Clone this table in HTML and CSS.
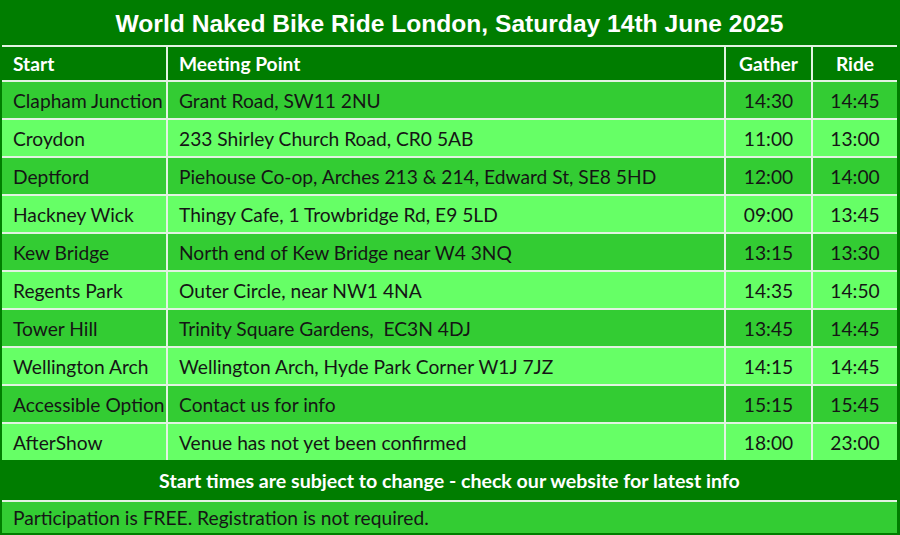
FILE: index.html
```html
<!DOCTYPE html>
<html>
<head>
<meta charset="utf-8">
<link rel="stylesheet" href="styles.css">
</head>
<body>
<div class="sheet">
  <div class="title">World Naked Bike Ride London, Saturday 14th June 2025</div>
  <table class="grid">
    <colgroup>
      <col class="c-start"><col class="c-meet"><col class="c-time"><col class="c-time2">
    </colgroup>
    <thead>
      <tr class="head">
        <th class="l">Start</th><th class="l">Meeting Point</th><th>Gather</th><th>Ride</th>
      </tr>
    </thead>
    <tbody>
      <tr class="mid"><td>Clapham Junction</td><td>Grant Road, SW11 2NU</td><td class="t">14:30</td><td class="t">14:45</td></tr>
      <tr class="lite"><td>Croydon</td><td>233 Shirley Church Road, CR0 5AB</td><td class="t">11:00</td><td class="t">13:00</td></tr>
      <tr class="mid"><td>Deptford</td><td>Piehouse Co-op, Arches 213 &amp; 214, Edward St, SE8 5HD</td><td class="t">12:00</td><td class="t">14:00</td></tr>
      <tr class="lite"><td>Hackney Wick</td><td>Thingy Cafe, 1 Trowbridge Rd, E9 5LD</td><td class="t">09:00</td><td class="t">13:45</td></tr>
      <tr class="mid"><td>Kew Bridge</td><td>North end of Kew Bridge near W4 3NQ</td><td class="t">13:15</td><td class="t">13:30</td></tr>
      <tr class="lite"><td>Regents Park</td><td>Outer Circle, near NW1 4NA</td><td class="t">14:35</td><td class="t">14:50</td></tr>
      <tr class="mid"><td>Tower Hill</td><td>Trinity Square Gardens,&nbsp; EC3N 4DJ</td><td class="t">13:45</td><td class="t">14:45</td></tr>
      <tr class="lite"><td>Wellington Arch</td><td>Wellington Arch, Hyde Park Corner W1J 7JZ</td><td class="t">14:15</td><td class="t">14:45</td></tr>
      <tr class="mid"><td>Accessible Option</td><td>Contact us for info</td><td class="t">15:15</td><td class="t">15:45</td></tr>
      <tr class="lite"><td>AfterShow</td><td>Venue has not yet been confirmed</td><td class="t">18:00</td><td class="t">23:00</td></tr>
      <tr class="note"><td colspan="4">Start times are subject to change - check our website for latest info</td></tr>
      <tr class="foot"><td colspan="4">Participation is FREE. Registration is not required.</td></tr>
    </tbody>
  </table>
</div>
</body>
</html>
```
FILE: styles.css
```css
html, body {
  margin: 0;
  padding: 0;
  background: #007d00;
}
.sheet {
  width: 900px;
  height: 535px;
  box-sizing: border-box;
  padding: 0 3px 2px 2px;
  background: #007d00;
  font-family: Lato, "Open Sans", sans-serif;
}
.title {
  height: 45px;
  line-height: 47px;
  text-align: center;
  color: #fff;
  font-family: "Liberation Sans", Arial, sans-serif;
  font-weight: bold;
  font-size: 24.6px;
}
.grid {
  width: 895px;
  border-collapse: collapse;
  table-layout: fixed;
}
.c-start { width: 165px; }
.c-meet { width: 558px; }
.c-time { width: 87px; }
.c-time2 { width: 85px; }
.grid th, .grid td {
  padding: 0 0 0 11px;
  border-top: 2px solid #e2f3e2;
  border-left: 2px solid #e2f3e2;
  font-size: 19.2px;
  color: #151515;
  white-space: nowrap;
  overflow: hidden;
}
.grid th:first-child, .grid td:first-child {
  border-left: none;
}
.head th {
  height: 33px;
  color: #fff;
  font-weight: bold;
  text-align: center;
  padding: 0;
  background: #007d00;
}
.head th.l {
  text-align: left;
  padding-left: 11px;
}
.mid td, .lite td {
  height: 36px;
}
.mid td { background: #33cc33; }
.lite td { background: #66ff66; }
.grid td.t {
  text-align: center;
  padding: 0;
}
.note td {
  height: 40px;
  border-top: none;
  background: #007d00;
  color: #fff;
  font-weight: bold;
  font-size: 19.6px;
  text-align: center;
  padding: 0;
}
.foot td {
  height: 31px;
  background: #33cc33;
}
```
